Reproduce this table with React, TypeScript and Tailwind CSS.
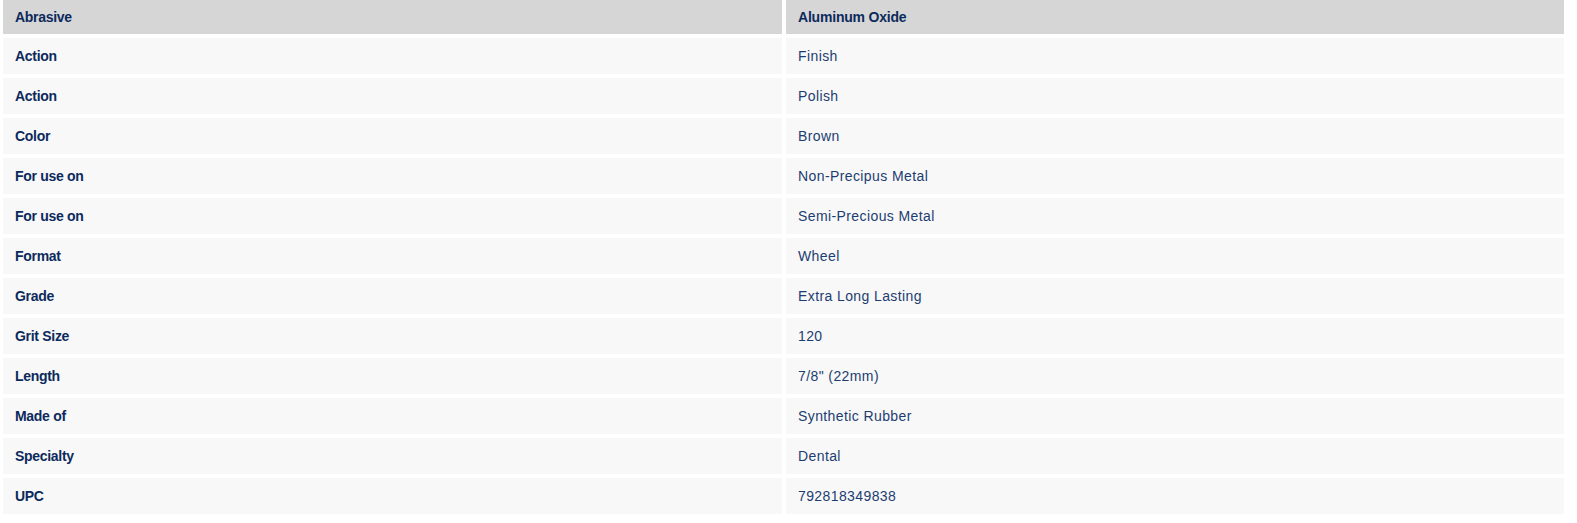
import React from "react"

const specs = [
  ["Action", "Finish"],
  ["Action", "Polish"],
  ["Color", "Brown"],
  ["For use on", "Non-Precipus Metal"],
  ["For use on", "Semi-Precious Metal"],
  ["Format", "Wheel"],
  ["Grade", "Extra Long Lasting"],
  ["Grit Size", "120"],
  ["Length", '7/8" (22mm)'],
  ["Made of", "Synthetic Rubber"],
  ["Specialty", "Dental"],
  ["UPC", "792818349838"]
]

export default function App() {
  return (
    <div className="min-h-screen bg-white pl-[3px] font-['Liberation_Sans',Arial,sans-serif] text-[14px]">
      <div className="grid grid-cols-[779px_778px] gap-[4px]">
        <div className="flex h-[34px] items-center bg-[#d6d6d6] px-[12px] font-bold tracking-[-0.3px] text-[#0c2a5c]">
          Abrasive
        </div>
        <div className="flex h-[34px] items-center bg-[#d6d6d6] px-[12px] font-bold tracking-[-0.2px] text-[#0c2a5c]">
          Aluminum Oxide
        </div>
        {specs.map(([label, value], i) => (
          <React.Fragment key={i}>
            <div className="flex h-[36px] items-center bg-[#f8f8f8] px-[12px] font-bold tracking-[-0.3px] text-[#0c2a5c]">
              {label}
            </div>
            <div className="flex h-[36px] items-center bg-[#f8f8f8] px-[12px] tracking-[0.4px] text-[#1d3d70]">
              {value}
            </div>
          </React.Fragment>
        ))}
      </div>
    </div>
  )
}
